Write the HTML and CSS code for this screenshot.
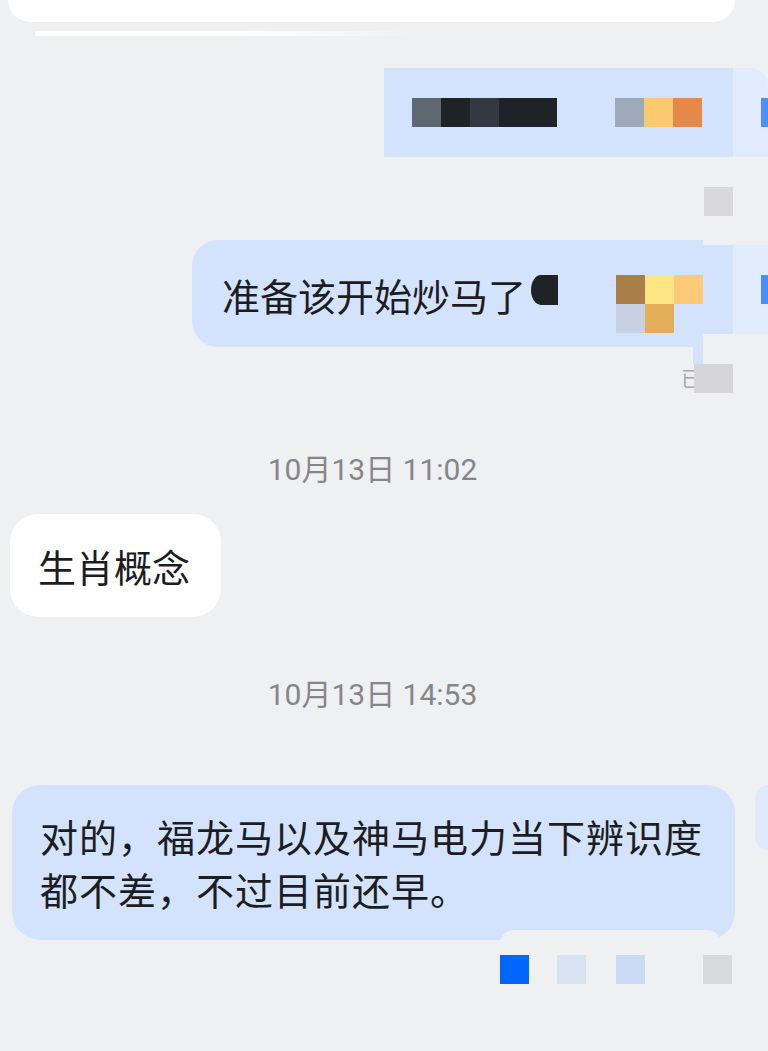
FILE: index.html
```html
<!DOCTYPE html>
<html lang="zh-CN">
<head>
<meta charset="utf-8">
<title>聊天</title>
<link rel="stylesheet" href="styles.css">
</head>
<body>
<main class="chat">
  <div class="top-bubble"></div>
  <div class="smudge"></div>

  <div class="row row-out row-1">
    <div class="mosaic-bubble">
      <div class="blocks">
        <i class="b" style="background:#5f6770"></i><i class="b" style="background:#202326"></i><i class="b" style="background:#343840"></i><i class="b" style="background:#1f2226"></i><i class="b" style="background:#1f2226"></i>
      </div>
      <div class="blocks gap-left">
        <i class="b" style="background:#9eaabb"></i><i class="b" style="background:#fbc96f"></i><i class="b" style="background:#e5884a"></i>
      </div>
    </div>
    <div class="edge edge-1"><i class="b blue"></i></div>
  </div>

  <div class="receipt"></div>

  <div class="row row-out row-2">
    <div class="bubble bubble-2">
      <span class="msg">准备该开始炒马了</span>
      <span class="blob"></span>
      <div class="mosaic-grid">
        <i class="b" style="background:#a97f47"></i><i class="b" style="background:#fde583"></i><i class="b" style="background:#fdca77"></i>
        <i class="b" style="background:#c8d1e3"></i><i class="b" style="background:#e2ae58"></i>
      </div>
    </div>
    <div class="side"></div>
    <div class="edge edge-2"><i class="b blue"></i></div>
  </div>

  <div class="read">
    <div class="strip"></div>
    <div class="read-row"><span class="read-text">已</span><span class="read-box"></span></div>
  </div>

  <div class="time time-1">10月13日 11:02</div>

  <div class="row row-in">
    <div class="bubble bubble-in"><span class="msg">生肖概念</span></div>
  </div>

  <div class="time time-2">10月13日 14:53</div>

  <div class="row row-4">
    <div class="bubble bubble-4"><p class="msg-long">对的，福龙马以及神马电力当下辨识度<br>都不差，不过目前还早。</p></div>
    <div class="edge-4"></div>
  </div>

  <div class="bottom-blocks">
    <i class="b" style="background:#0066ff"></i>
    <i class="b" style="background:#d8e3f2"></i>
    <i class="b" style="background:#c9daf5"></i>
    <i class="b far" style="background:#d9dadc"></i>
  </div>
</main>
</body>
</html>
```

FILE: styles.css
```css
* { box-sizing: border-box; }
html, body { margin: 0; padding: 0; }
body {
  background: #eff0f2;
  width: 768px;
  height: 1051px;
  overflow: hidden;
  font-family: "Noto Sans CJK SC", "Noto Sans", sans-serif;
  color: #1d1d1f;
}
.chat { display: flex; flex-direction: column; }
.b { display: block; width: 29px; height: 29px; flex: none; }

.top-bubble {
  height: 22px;
  margin: 0 33px 0 8px;
  background: #ffffff;
  border-radius: 0 0 24px 24px;
}
.smudge {
  height: 5px;
  width: 385px;
  margin: 9px 0 0 35px;
  background: linear-gradient(to right, #ffffff 55%, rgba(255,255,255,0));
  border-radius: 3px;
}

.row { display: flex; }
.row-out { justify-content: flex-end; }

.row-1 { margin-top: 32px; align-items: stretch; }
.mosaic-bubble {
  width: 349px;
  height: 89px;
  background: #d3e3fd;
  display: flex;
  align-items: center;
  padding-left: 28px;
}
.blocks { display: flex; }
.gap-left { margin-left: 58px; }
.edge {
  width: 35px;
  background: #e0ebfd;
  display: flex;
  align-items: center;
  padding-left: 28px;
  overflow: hidden;
}
.edge-1 { height: 89px; border-top-right-radius: 18px; }
.blue { background: #4a8ffa; }

.receipt {
  align-self: flex-end;
  width: 29px;
  height: 29px;
  margin: 30px 35px 0 0;
  background: #d9d9db;
}

.row-2 { margin-top: 24px; align-items: flex-start; }
.bubble-2 {
  width: 511px;
  height: 107px;
  background: #d3e3fd;
  border-radius: 26px 0 0 26px;
  display: flex;
  align-items: flex-start;
  padding: 36px 0 0 30px;
}
.msg {
  font-size: 38px;
  line-height: 38px;
  white-space: nowrap;
}
.blob {
  width: 28px;
  height: 30px;
  margin: -1px 0 0 5px;
  background: #1f2226;
  border-radius: 10px 0 0 10px / 15px 0 0 15px;
}
.mosaic-grid {
  margin: -1px 0 0 58px;
  display: grid;
  grid-template-columns: repeat(3, 29px);
  grid-auto-rows: 29px;
}
.side {
  width: 30px;
  height: 89px;
  margin-top: 5px;
  background: #d3e3fd;
}
.edge-2 { height: 89px; margin-top: 5px; background: #e1ecfd; }

.read {
  align-self: flex-end;
  margin-right: 35px;
  width: 52px;
  display: flex;
  flex-direction: column;
}
.strip {
  width: 10px;
  height: 17px;
  margin-left: 12px;
  background: #d3e3fd;
}
.read-row { display: flex; align-items: flex-start; }
.read-text {
  font-size: 21px;
  line-height: 24px;
  color: #a9a9ad;
  margin-top: 1px;
  white-space: nowrap;
}
.read-box {
  width: 39px;
  height: 29px;
  margin-left: -8px;
  background: #d6d6d8;
}

.time {
  align-self: center;
  margin-right: 23px;
  font-family: Roboto, "Noto Sans CJK SC", sans-serif;
  font-size: 30px;
  line-height: 30px;
  color: #86868a;
  white-space: nowrap;
}
.time-1 { margin-top: 62px; }
.time-2 { margin-top: 63px; }

.row-in { margin-top: 29px; }
.bubble-in {
  width: 211px;
  height: 103px;
  margin-left: 10px;
  background: #ffffff;
  border-radius: 28px;
  display: flex;
  align-items: center;
  padding-left: 28px;
}

.row-4 { margin-top: 75px; align-items: flex-start; }
.bubble-4 {
  position: relative;
  width: 723px;
  margin-left: 12px;
  background: #d3e3fd;
  border-radius: 28px;
  padding: 24px 0 25px 28px;
}
.bubble-4::after {
  content: "";
  position: absolute;
  left: 488px;
  right: 14px;
  bottom: -4px;
  height: 14px;
  background: #eff0f2;
  border-radius: 14px 14px 0 0;
}
.msg-long {
  margin: 0;
  font-size: 38px;
  line-height: 53px;
  letter-spacing: 1px;
  white-space: nowrap;
}
.edge-4 {
  width: 13px;
  height: 65px;
  margin-left: 20px;
  background: #dfeafc;
  border-radius: 16px 0 0 16px;
}

.bottom-blocks {
  align-self: flex-end;
  margin: 15px 36px 0 0;
  display: flex;
  gap: 28px;
}
.bottom-blocks .b:nth-child(3) { margin-left: 2px; }
.bottom-blocks .far { margin-left: 30px; }
```
